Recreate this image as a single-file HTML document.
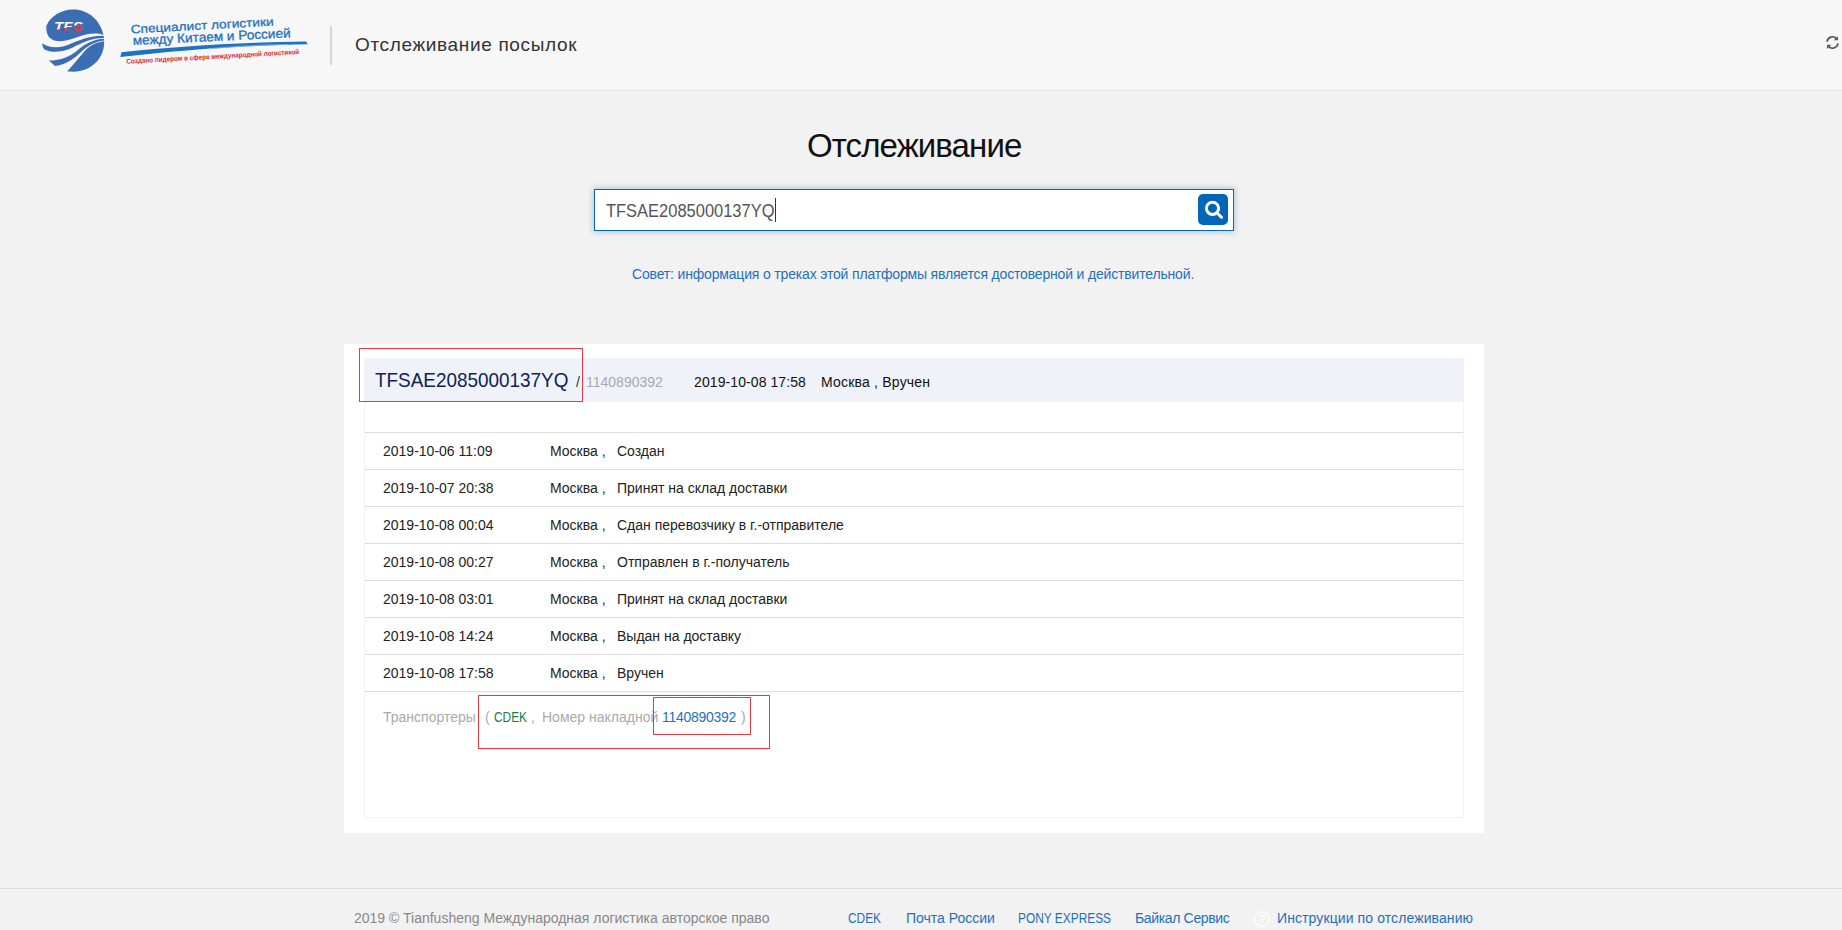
<!DOCTYPE html>
<html><head><meta charset="utf-8">
<style>
*{margin:0;padding:0;box-sizing:border-box}
html,body{width:1842px;height:930px;overflow:hidden}
body{background:#f2f2f2;font-family:"Liberation Sans",sans-serif;position:relative;color:#333}
.abs{position:absolute;white-space:pre}
#hdr{position:absolute;left:0;top:0;width:1842px;height:91px;background:#f7f7f7;border-bottom:1px solid #e8e8e8}
#divl{position:absolute;left:330px;top:26px;width:2px;height:39px;background:#d6d6d6}
#htitle{left:355px;top:34px;font-size:19px;letter-spacing:0.65px;color:#333}
#title{left:807px;top:127px;font-size:33px;letter-spacing:-0.9px;color:#111}
#inp{position:absolute;left:594px;top:189px;width:640px;height:42px;background:#fff;border:1px solid #0a66b9;box-shadow:0 0 6px 1px rgba(0,100,190,.3)}
#inptxt{left:606px;top:201px;font-size:18px;transform:scaleX(0.915);transform-origin:0 0;color:#555}
#caret{position:absolute;left:775px;top:198px;width:1px;height:24px;background:#333}
#btn{position:absolute;left:1198px;top:194px;width:30px;height:31px;background:#0066b8;border-radius:5px}
#tip{left:632px;top:266px;font-size:14px;letter-spacing:-0.17px;color:#1f6fbf}
#card{position:absolute;left:344px;top:344px;width:1140px;height:489px;background:#fff}
#band{position:absolute;left:364px;top:358px;width:1100px;height:44px;background:#eff2f9}
#box{position:absolute;left:364px;top:402px;width:1100px;height:416px;border:1px solid #f3f3f3;border-top:none}
.rl{position:absolute;left:365px;width:1098px;height:1px;background:#dedede}
.t14{font-size:14px;color:#222}
#trk{left:375px;top:368px;font-size:21px;transform:scaleX(0.9);transform-origin:0 0;color:#0f2356}
#sl{left:576px;top:374px;font-size:14px;color:#333}
#sub{left:586px;top:374px;font-size:14px;color:#aaa}
.red{position:absolute;border:1px solid #e8383d}
#ftl{position:absolute;left:0;top:888px;width:1842px;height:1px;background:#dcdcdc}
.ft{font-size:14px;color:#888}
.fl{font-size:14px;color:#1f6fbf}
</style></head><body>
<div id="hdr"></div>
<svg style="position:absolute;left:40px;top:5px" width="70" height="70" viewBox="0 0 930 930">
<defs><linearGradient id="tfsg" gradientUnits="userSpaceOnUse" x1="372" y1="259" x2="388" y2="331"><stop offset="0.5" stop-color="#fff"/><stop offset="0.5" stop-color="#e8343a"/></linearGradient></defs>
<g fill="#3b6db5">
<path d="M85 275 C140 150 280 62 440 60 C640 58 800 200 843 395 C760 368 640 372 520 418 C400 466 280 498 190 470 C110 442 78 380 85 275 Z"/>
<path d="M28 508 C100 558 200 578 320 548 C450 510 600 408 845 410 L850 440 C680 440 560 505 430 568 C300 630 150 640 60 592 C40 572 30 540 28 508 Z"/>
<path d="M118 738 C280 738 400 680 500 600 C620 500 740 452 850 450 L852 472 C740 480 640 540 560 610 C480 690 360 790 200 812 Z"/>
<path d="M360 884 C420 820 500 720 560 650 C640 550 740 490 852 482 C860 700 690 886 440 886 C410 886 385 885 360 884 Z"/>
</g>
<text x="185" y="345" font-family="Liberation Sans" font-weight="bold" font-style="italic" font-size="170" fill="url(#tfsg)" textLength="385" lengthAdjust="spacingAndGlyphs">TFS</text>
</svg>
<svg style="position:absolute;left:110px;top:5px" width="210" height="70" viewBox="0 0 210 70">
<text x="21" y="28.5" transform="rotate(-3.2 21 28.5)" font-family="Liberation Sans" font-size="12" fill="#1e73c0" stroke="#1e73c0" stroke-width="0.3" textLength="143" lengthAdjust="spacingAndGlyphs">Специалист логистики</text>
<text x="23" y="40" transform="rotate(-2.8 23 40)" font-family="Liberation Sans" font-size="13" fill="#1e73c0" stroke="#1e73c0" stroke-width="0.3" textLength="158" lengthAdjust="spacingAndGlyphs">между Китаем и Россией</text>
<path d="M10.3 52 C70 45 130 40.5 197.8 39.3 L196 36.5 C130 37.5 70 41 11.5 47.3 Z" fill="#1e73c0"/><path d="M98 43.8 C130 41 160 39.6 178 39.5" fill="none" stroke="#8fb8e0" stroke-width="0.8"/>
<text x="16.5" y="58.7" transform="rotate(-3.2 16.5 58.7)" font-family="Liberation Sans" font-weight="bold" font-size="7" fill="#e0262e" textLength="173" lengthAdjust="spacingAndGlyphs">Создано лидером в сфере международной логистикой</text>
</svg>
<svg style="position:absolute;left:1825px;top:35px" width="15" height="15" viewBox="0 0 16 16">
<path d="M2.2 7.2 A5.8 5.8 0 0 1 12.4 4" fill="none" stroke="#555" stroke-width="1.8"/>
<path d="M13.8 1.2 L13.8 5.6 L9.4 5.6 Z" fill="#555"/>
<path d="M13.8 8.8 A5.8 5.8 0 0 1 3.6 12" fill="none" stroke="#555" stroke-width="1.8"/>
<path d="M2.2 14.8 L2.2 10.4 L6.6 10.4 Z" fill="#555"/>
</svg>
<div id="divl"></div>
<div class="abs" id="htitle">Отслеживание посылок</div>

<div class="abs" id="title">Отслеживание</div>
<div id="inp"></div>
<div class="abs" id="inptxt">TFSAE2085000137YQ</div>
<div id="caret"></div>
<div id="btn"><svg style="position:absolute;left:0;top:0" width="30" height="31" viewBox="0 0 30 31"><circle cx="14.5" cy="14.3" r="6.1" fill="none" stroke="#fff" stroke-width="3"/><path d="M19 19 L23.6 23.3" stroke="#fff" stroke-width="3" stroke-linecap="round"/></svg></div>
<div class="abs" id="tip">Совет: информация о треках этой платформы является достоверной и действительной.</div>

<div id="card"></div>
<div id="band"></div>
<div id="box"></div>
<div class="abs" id="trk">TFSAE2085000137YQ</div>
<div class="abs" id="sl">/</div>
<div class="abs" id="sub">1140890392</div>
<div class="abs t14" style="left:694px;top:374px;color:#111;letter-spacing:0.09px">2019-10-08 17:58</div>
<div class="abs t14" style="left:821px;top:374px;color:#111;letter-spacing:0.2px">Москва , Вручен</div>
<div class="red" style="left:359px;top:348px;width:224px;height:54px"></div>

<div class="rl" style="top:432px"></div>
<div class="rl" style="top:469px"></div>
<div class="rl" style="top:506px"></div>
<div class="rl" style="top:543px"></div>
<div class="rl" style="top:580px"></div>
<div class="rl" style="top:617px"></div>
<div class="rl" style="top:654px"></div>
<div class="rl" style="top:691px"></div>

<div class="abs t14" style="left:383px;top:443px">2019-10-06 11:09</div>
<div class="abs t14" style="left:550px;top:443px">Москва ,</div>
<div class="abs t14" style="left:617px;top:443px">Создан</div>
<div class="abs t14" style="left:383px;top:480px">2019-10-07 20:38</div>
<div class="abs t14" style="left:550px;top:480px">Москва ,</div>
<div class="abs t14" style="left:617px;top:480px">Принят на склад доставки</div>
<div class="abs t14" style="left:383px;top:517px">2019-10-08 00:04</div>
<div class="abs t14" style="left:550px;top:517px">Москва ,</div>
<div class="abs t14" style="left:617px;top:517px">Сдан перевозчику в г.-отправителе</div>
<div class="abs t14" style="left:383px;top:554px">2019-10-08 00:27</div>
<div class="abs t14" style="left:550px;top:554px">Москва ,</div>
<div class="abs t14" style="left:617px;top:554px">Отправлен в г.-получатель</div>
<div class="abs t14" style="left:383px;top:591px">2019-10-08 03:01</div>
<div class="abs t14" style="left:550px;top:591px">Москва ,</div>
<div class="abs t14" style="left:617px;top:591px">Принят на склад доставки</div>
<div class="abs t14" style="left:383px;top:628px">2019-10-08 14:24</div>
<div class="abs t14" style="left:550px;top:628px">Москва ,</div>
<div class="abs t14" style="left:617px;top:628px">Выдан на доставку</div>
<div class="abs t14" style="left:383px;top:665px">2019-10-08 17:58</div>
<div class="abs t14" style="left:550px;top:665px">Москва ,</div>
<div class="abs t14" style="left:617px;top:665px">Вручен</div>

<div class="abs t14" style="left:383px;top:709px;color:#aaa">Транспортеры</div>
<div class="abs t14" style="left:485px;top:709px;color:#aaa">(</div>
<div class="abs t14" style="left:494px;top:709px;color:#1d7a45;transform:scaleX(0.85);transform-origin:0 0">CDEK</div>
<div class="abs t14" style="left:531px;top:709px;color:#aaa">,</div>
<div class="abs t14" style="left:542px;top:709px;color:#aaa">Номер накладной</div>
<div class="abs t14" style="left:662px;top:709px;color:#1f6fbf;letter-spacing:-0.28px">1140890392</div>
<div class="abs t14" style="left:741px;top:709px;color:#aaa">)</div>
<div class="red" style="left:478px;top:695px;width:292px;height:54px"></div>
<div class="red" style="left:653px;top:697px;width:98px;height:38px"></div>

<div class="ftl" id="ftl"></div>
<div class="abs ft" style="left:354px;top:910px">2019 © Tianfusheng Международная логистика авторское право</div>
<div class="abs fl" style="left:848px;top:910px;transform:scaleX(0.85);transform-origin:0 0">CDEK</div>
<div class="abs fl" style="left:906px;top:910px">Почта России</div>
<div class="abs fl" style="left:1018px;top:910px;transform:scaleX(0.85);transform-origin:0 0">PONY EXPRESS</div>
<div class="abs fl" style="left:1135px;top:910px;letter-spacing:-0.35px">Байкал Сервис</div>
<svg style="position:absolute;left:1254px;top:911px" width="16" height="16" viewBox="0 0 16 16"><circle cx="8" cy="8" r="7.2" fill="none" stroke="#fff" stroke-width="1.2"/><text x="8" y="12.2" text-anchor="middle" font-family="Liberation Sans" font-size="11" fill="#fff">?</text></svg>
<div class="abs fl" style="left:1277px;top:910px;letter-spacing:0.1px">Инструкции по отслеживанию</div>
</body></html>
